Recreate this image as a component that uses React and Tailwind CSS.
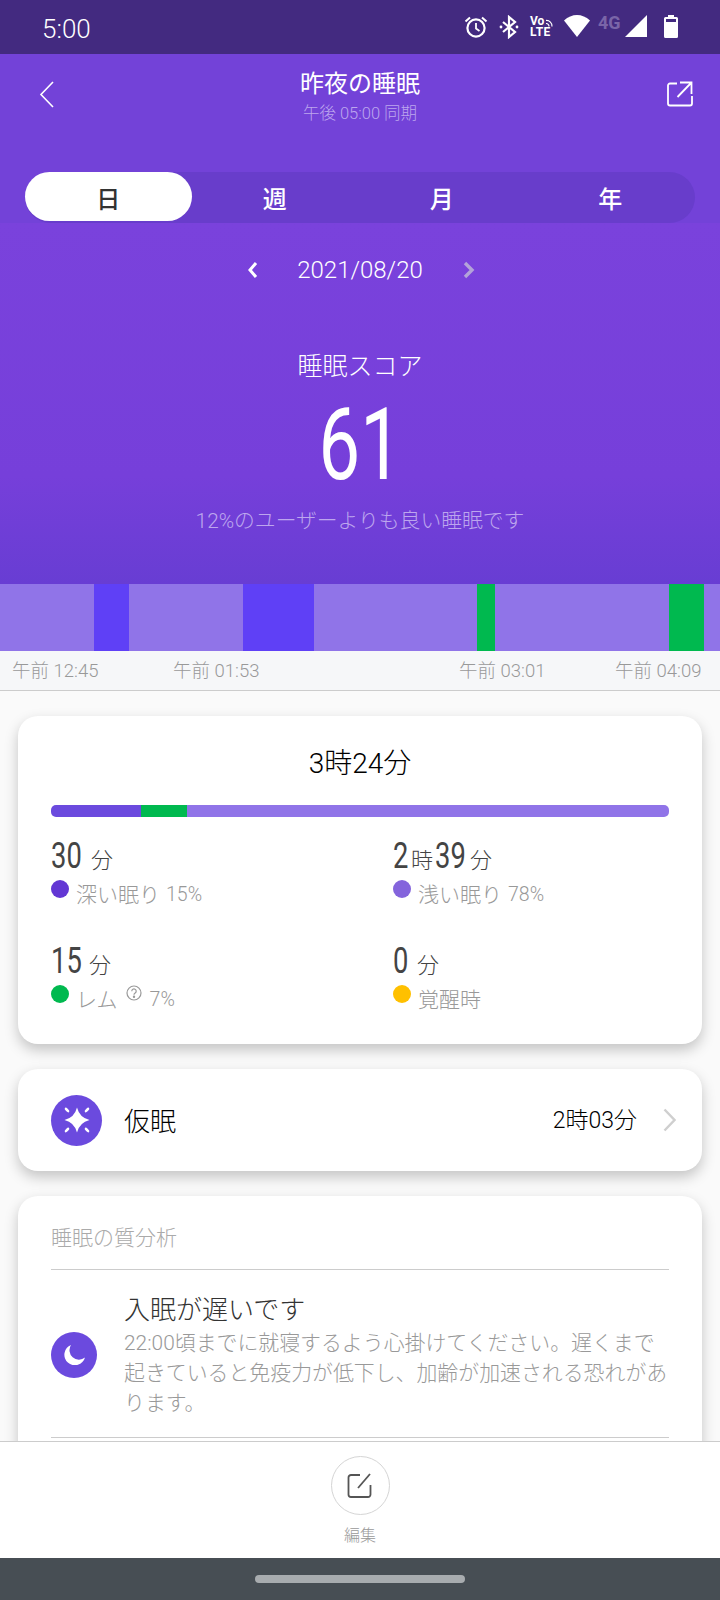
import React from 'react';

const JP = "font-['Roboto','Noto_Sans_CJK_JP',sans-serif]";

const segments = [
  ['w-[94px]', 'bg-[#9074e8]'],
  ['w-[35px]', 'bg-[#5f40f6]'],
  ['w-[114px]', 'bg-[#9074e8]'],
  ['w-[71px]', 'bg-[#5f40f6]'],
  ['w-[163px]', 'bg-[#9074e8]'],
  ['w-[18px]', 'bg-[#00b94f]'],
  ['w-[174px]', 'bg-[#9074e8]'],
  ['w-[35px]', 'bg-[#00b94f]'],
  ['w-[16px]', 'bg-[#9074e8]'],
];

const StatusIcons = () => (
  <div className="flex items-start pt-[15px]">
    <svg width="24" height="24" viewBox="0 0 24 24" fill="none" stroke="white" strokeWidth="2.2">
      <circle cx="12" cy="13" r="8.6" />
      <path d="M12 8v5.500l3.500 2.500" strokeWidth="1.800" />
      <path d="M1.500 6.500 6 2.500M22.500 6.500 18 2.500" strokeWidth="2" />
    </svg>
    <svg width="20" height="24" viewBox="0 0 20 24" className="ml-[11px]" fill="none" stroke="white" strokeWidth="2.2">
      <path d="M4 7l12 10-6 5V2l6 5L4 17" />
      <circle cx="2" cy="12" r="1.400" fill="white" stroke="none" />
      <circle cx="18" cy="12" r="1.400" fill="white" stroke="none" />
    </svg>
    <div className="relative ml-[11px] w-[25px] h-[22px] text-white font-bold font-['Roboto',sans-serif] text-[12px] leading-[11px]">
      <div className="mt-[1px]">Vo</div>
      <div className="tracking-[0.5px]">LTE</div>
      <svg width="10" height="10" viewBox="0 0 10 10" className="absolute right-0 top-[2px]" fill="none" stroke="white" strokeWidth="1.200">
        <path d="M1 3.500a5.500 5.500 0 0 1 6 6M1 6.500a2.800 2.800 0 0 1 3 3" />
      </svg>
    </div>
    <svg width="26" height="22" viewBox="0 0 26 22" className="ml-[9px]" fill="white">
      <path d="M13 22 0 5.500Q6 0 13 0t13 5.500z" />
    </svg>
    <div className="ml-[8px] w-[24px] font-bold font-['Roboto',sans-serif] text-[18px] leading-[15px] text-[#7a65a8]">4G</div>
    <svg width="22" height="22" viewBox="0 0 22 22" className="ml-[3px]" fill="white">
      <path d="M22 0v22H0z" />
    </svg>
    <svg width="14" height="23" viewBox="0 0 14 23" className="ml-[17px]" fill="white">
      <path d="M4 0h6v2h2.500A1.500 1.500 0 0 1 14 3.500v18a1.500 1.500 0 0 1-1.500 1.500h-11A1.500 1.500 0 0 1 0 21.500v-18A1.500 1.500 0 0 1 1.500 2H4z" />
      <path d="M2 4h10v3H2z" fill="#432a80" />
    </svg>
  </div>
);

// digits in the reference are condensed, so squeeze them inside a fixed box
const Digits = ({ n, w }) => (
  <span className={`${w} inline-block h-[34px]`}>
    <span className="inline-block origin-left scale-x-[0.76] font-normal font-['Roboto',sans-serif] text-[36px] leading-[34px]">{n}</span>
  </span>
);

const Stat = ({ children, dot, label, pct, help }) => (
  <div>
    <div className="flex items-baseline h-[34px] text-[#444]">{children}</div>
    <div className={`${JP} font-light flex items-start mt-[8px] text-[21px] leading-[28px] text-[#999]`}>
      <span className="mt-[-1px] flex">
        <span className={`w-[18px] h-[18px] rounded-full ${dot}`} />
      </span>
      <span className="ml-[7px]">{label}</span>
      {help && (
        <svg width="16" height="16" viewBox="0 0 16 16" className="ml-[8px] mr-[2px] mt-[-1px]" fill="none" stroke="#999" strokeWidth="1.200">
          <circle cx="8" cy="8" r="7" />
          <path d="M5.800 6.200a2.200 2.200 0 1 1 3.400 1.800c-.8.500-1.200 1-1.200 1.800" />
          <circle cx="8" cy="11.800" r=".6" fill="#999" />
        </svg>
      )}
      {pct && <span className="ml-[6px] text-[19.500px]">{pct}</span>}
    </div>
  </div>
);

const Unit = ({ children, className }) => (
  <span className={`${JP} font-light text-[22px] leading-[34px] ${className}`}>{children}</span>
);

export default function App() {
  return (
    <div className={`${JP} w-[720px] h-[1600px] flex flex-col overflow-hidden bg-[#fafafa]`}>
      {/* status bar */}
      <div className="h-[54px] shrink-0 bg-[#432a80] flex justify-between pl-[42px] pr-[42px] text-white">
        <span className="text-[26px] font-light leading-[58px]">5:00</span>
        <StatusIcons />
      </div>

      {/* header */}
      <div className="h-[169px] shrink-0 bg-[#7342d8] text-white relative">
        <svg width="16" height="27" viewBox="0 0 16 27" className="absolute left-[39px] top-[27px]" fill="none" stroke="white" strokeWidth="1.600">
          <path d="M14 1 2 13.500 14 26" />
        </svg>
        <svg width="26" height="26" viewBox="0 0 26 26" className="absolute right-[27px] top-[27px]" fill="none" stroke="white" strokeWidth="1.800">
          <path d="M10 2.500H3A2 2 0 0 0 1 4.500v18a2 2 0 0 0 2 2h20a2 2 0 0 0 2-2V15" />
          <path d="M10.500 16 24.500 1.500M13 1.500h11.500V13" />
        </svg>
        <div className="text-center text-[24px] leading-[32px] pt-[14px]">昨夜の睡眠</div>
        <div className="text-center text-[16.500px] leading-[22px] mt-[3px] font-light text-[#bda6ee]">午後 05:00 同期</div>
        <div className="mx-[25px] mt-[47px] h-[51px] rounded-full bg-[#683dcb] flex text-[24px] font-medium leading-[56px] text-center">
          <div className="w-[167px] h-[49px] rounded-full bg-white text-[#333]">日</div>
          <div className="w-[167px]">週</div>
          <div className="w-[168px]">月</div>
          <div className="w-[170px]">年</div>
        </div>
      </div>

      {/* score */}
      <div className="h-[361px] shrink-0 bg-gradient-to-b from-[#7a42dc] via-[#763fda] via-70% to-[#683dd3] text-white flex flex-col items-center">
        <div className="flex items-center mt-[31px] h-[32px] ml-[2px]">
          <svg width="11" height="18" viewBox="0 0 11 18" fill="none" stroke="white" strokeWidth="3">
            <path d="M9 2 3 9l6 7" />
          </svg>
          <span className="mx-[39px] text-[24px] font-light leading-[32px]">2021/08/20</span>
          <svg width="13" height="18" viewBox="0 0 13 18" fill="none" stroke="#b3a3d9" strokeWidth="3.400">
            <path d="M3 2l7 7-7 7" />
          </svg>
        </div>
        <div className="mt-[65px] text-[25px] leading-[32px] font-light">睡眠スコア</div>
        <div className="scale-x-[0.74] font-[450] text-[100px] leading-[100px] mt-[12px]">61</div>
        <div className="mt-[11px] text-[20.800px] leading-[30px] font-light text-[#bda6ee]">12%のユーザーよりも良い睡眠です</div>
      </div>

      {/* timeline */}
      <div className="h-[67px] shrink-0 flex">
        {segments.map(([w, c], i) => (
          <div key={i} className={`${w} ${c}`} />
        ))}
      </div>
      <div className="h-[40px] shrink-0 bg-[#f6f7f9] border-b border-[#cccccc] text-[18.500px] leading-[40px] font-light text-[#999] flex">
        <span className="ml-[12px] w-[161px]">午前 12:45</span>
        <span className="w-[286px]">午前 01:53</span>
        <span className="w-[156px]">午前 03:01</span>
        <span>午前 04:09</span>
      </div>

      {/* scroll area */}
      <div className="flex-1 min-h-0 overflow-hidden px-[18px] pt-[25px] flex flex-col gap-[25px]">
        <div className="h-[328px] shrink-0 rounded-[20px] bg-white shadow-[0_6px_14px_rgba(0,0,0,0.22)] px-[33px]">
          <div className="pt-[29px] text-center text-[28px] leading-[38px] font-light text-black">3時24分</div>
          <div className="mt-[22px] h-[12px] rounded-[5px] overflow-hidden flex">
            <div className="w-[90px] bg-[#6b4ade]" />
            <div className="w-[46px] bg-[#00b94f]" />
            <div className="flex-1 bg-[#9074e8]" />
          </div>
          <div className="grid grid-cols-[342px_1fr] gap-y-[35px] mt-[22px]">
            <Stat dot="bg-[#6337d4]" label="深い眠り" pct="15%">
              <Digits n="30" w="w-[31px]" />
              <Unit className="ml-[9px]">分</Unit>
            </Stat>
            <Stat dot="bg-[#8464dc]" label="浅い眠り" pct="78%">
              <Digits n="2" w="w-[18px]" />
              <Unit className="mr-[2px]">時</Unit>
              <Digits n="39" w="w-[32px]" />
              <Unit className="ml-[3px]">分</Unit>
            </Stat>
            <Stat dot="bg-[#00b94f]" label="レム" pct="7%" help>
              <Digits n="15" w="w-[30px]" />
              <Unit className="ml-[8px]">分</Unit>
            </Stat>
            <Stat dot="bg-[#ffc000]" label="覚醒時">
              <Digits n="0" w="w-[16px]" />
              <Unit className="ml-[8px]">分</Unit>
            </Stat>
          </div>
        </div>

        <div className="h-[102px] shrink-0 rounded-[20px] bg-white shadow-[0_6px_14px_rgba(0,0,0,0.22)] pl-[33px] pr-[26px] flex items-center">
          <div className="w-[51px] h-[51px] rounded-full bg-[#6b4ade] flex items-center justify-center">
            <svg width="30" height="30" viewBox="0 0 30 30" fill="white">
              <path d="M15 2.500Q17.500 12.500 27.500 15Q17.500 17.500 15 27.500Q12.500 17.500 2.500 15Q12.500 12.500 15 2.500z" />
              <ellipse cx="5" cy="5" rx="1.300" ry="3" transform="rotate(-45 5 5)" />
              <ellipse cx="25" cy="5" rx="1.300" ry="3" transform="rotate(45 25 5)" />
              <ellipse cx="5" cy="25" rx="1.300" ry="3" transform="rotate(45 5 25)" />
              <ellipse cx="25" cy="25" rx="1.300" ry="3" transform="rotate(-45 25 25)" />
            </svg>
          </div>
          <span className="ml-[22px] mt-[4px] text-[26px] font-light text-black flex-1">仮眠</span>
          <span className="mt-[2px] text-[23px] font-light text-black">2時03分</span>
          <svg width="13" height="24" viewBox="0 0 13 24" className="ml-[26px]" fill="none" stroke="#cfcfcf" strokeWidth="2.400">
            <path d="M1.500 1.500 11.500 12l-10 10.500" />
          </svg>
        </div>

        <div className="h-[400px] shrink-0 rounded-[20px] bg-white shadow-[0_6px_14px_rgba(0,0,0,0.22)] px-[33px]">
          <div className="h-[74px] border-b border-[#cccccc] text-[21px] font-light text-[#aaa] leading-[84px]">睡眠の質分析</div>
          <div className="flex items-center pt-[22px] pb-[19px] border-b border-[#cccccc]">
            <div className="w-[46px] h-[46px] shrink-0 rounded-full bg-[#6b4ade] flex items-center justify-center">
              <svg width="21" height="20" viewBox="0 0 21 20" fill="white">
                <path d="M7 0A10.500 10.500 0 1 0 21 12.500A9.500 9.500 0 0 1 7 0z" />
              </svg>
            </div>
            <div className="ml-[27px] min-w-0">
              <div className="text-[26px] leading-[36px] font-light text-[#333]">入眠が遅いです</div>
              <div className="text-[20.900px] leading-[30px] font-light text-[#999]">22:00頃までに就寝するよう心掛けてください。遅くまで起きていると免疫力が低下し、加齢が加速される恐れがあります。</div>
            </div>
          </div>
        </div>
      </div>

      {/* bottom action */}
      <div className="h-[117px] shrink-0 bg-white border-t border-[#cccccc] flex flex-col items-center pt-[14px]">
        <div className="w-[59px] h-[59px] rounded-full border border-[#d5d5d5] flex items-center justify-center">
          <svg width="26" height="26" viewBox="0 0 26 26" fill="none" stroke="#555" strokeWidth="1.800">
            <path d="M13 2H4A2.500 2.500 0 0 0 1.500 4.500v17A2.500 2.500 0 0 0 4 24h17a2.500 2.500 0 0 0 2.500-2.500V12" />
            <path d="M11 15 23 1" />
          </svg>
        </div>
        <div className="mt-[10px] text-[16px] leading-[22px] font-light text-[#999]">編集</div>
      </div>

      {/* nav bar */}
      <div className="h-[42px] shrink-0 bg-[#474e54] flex items-center justify-center">
        <div className="w-[210px] h-[8px] rounded-full bg-[#a8acaf]" />
      </div>
    </div>
  );
}
